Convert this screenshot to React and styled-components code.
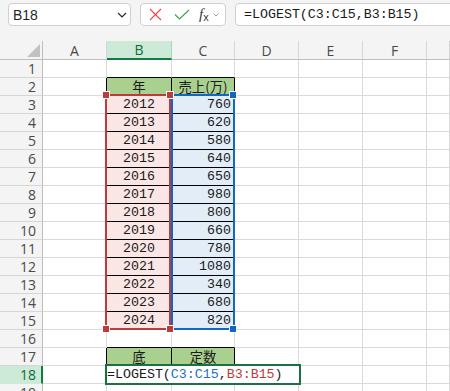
import React from "react";
import styled, { createGlobalStyle } from "styled-components";

const Global = createGlobalStyle`
  html, body { margin: 0; padding: 0; background: #ffffff; overflow: hidden; }
  body { width: 450px; height: 391px; font-family: "Liberation Sans", Arial, sans-serif; }
`;

const Page = styled.div`
  width: 450px;
  height: 391px;
  display: flex;
  flex-direction: column;
  overflow: hidden;
  background: #ffffff;
`;

const Toolbar = styled.div`
  height: 41px;
  flex: none;
  box-sizing: border-box;
  padding: 3px 0 0 8px;
  background: #f4f4f4;
  display: flex;
  align-items: flex-start;
  gap: 9px;
`;

const Box = styled.div`
  box-sizing: border-box;
  height: 23px;
  background: #ffffff;
  border: 1px solid #cfcfcf;
  border-radius: 4px;
  display: flex;
  align-items: center;
  flex: none;
  width: ${(p) => p.$w}px;
`;

const NameText = styled.span`
  font-family: "Liberation Sans", Arial, sans-serif;
  font-size: 14px;
  color: #1f1f1f;
  padding-left: 4px;
  flex: 1;
`;

const Chevron = styled.svg`
  margin-right: ${(p) => p.$mr || 0}px;
  flex: none;
`;

const IconSlot = styled.div`
  display: flex;
  align-items: center;
  justify-content: center;
  margin-left: ${(p) => p.$ml}px;
`;

const Fx = styled.span`
  font-family: "Liberation Serif", "Times New Roman", serif;
  font-style: italic;
  font-size: 15px;
  color: #3a3a3a;
  line-height: 1;
  & sub {
    font-size: 11px;
    font-style: normal;
    font-family: "Liberation Sans", Arial, sans-serif;
    vertical-align: -2px;
  }
`;

const FormulaText = styled.span`
  font-family: "Liberation Mono", "Courier New", monospace;
  font-size: 13.3px;
  color: #1a1a1a;
  padding-left: 8px;
  white-space: nowrap;
`;

const SheetWrap = styled.div`
  position: relative;
  flex: none;
`;

const Grid = styled.div`
  display: grid;
  grid-template-columns: 43px 64px 65px 63px 64px 64px 64px 1fr;
  grid-template-rows: 19px repeat(19, 18px);
`;

const Corner = styled.div`
  box-sizing: border-box;
  background: #f4f4f4;
  border-right: 1px solid #bdbdbd;
  border-bottom: 1px solid #bdbdbd;
  display: flex;
  align-items: flex-end;
  justify-content: flex-end;
  padding: 0 2px 2px 0;
`;

const ColHead = styled.div`
  box-sizing: border-box;
  background: ${(p) => (p.$sel ? "#cde9d7" : "#f4f4f4")};
  border-right: 1px solid ${(p) => (p.$sel ? "#a8d6b8" : "#d6d6d6")};
  border-bottom: ${(p) => (p.$sel ? "2px solid #107c41" : "1px solid #bdbdbd")};
  color: ${(p) => (p.$sel ? "#0e6b38" : "#4a4a4a")};
  font-family: "Open Sans", "Liberation Sans", sans-serif;
  font-size: 14px;
  display: flex;
  align-items: center;
  justify-content: center;
  line-height: 1;
  padding-top: 1px;
`;

const RowHead = styled.div`
  box-sizing: border-box;
  background: ${(p) => (p.$sel ? "#cde9d7" : "#f4f4f4")};
  border-right: ${(p) => (p.$sel ? "2px solid #107c41" : "1px solid #bdbdbd")};
  border-bottom: 1px solid ${(p) => (p.$sel ? "#cde9d7" : "#d6d6d6")};
  color: ${(p) => (p.$sel ? "#0e6b38" : "#4a4a4a")};
  font-family: "Open Sans", "Liberation Sans", sans-serif;
  font-size: 14px;
  display: flex;
  align-items: center;
  justify-content: flex-end;
  padding-right: ${(p) => (p.$sel ? 5 : 6)}px;
  line-height: 1;
`;

const Cell = styled.div`
  box-sizing: border-box;
  background: ${(p) => p.$bg || "#ffffff"};
  border-right: 1px solid ${(p) => p.$br || "#dadada"};
  border-bottom: 1px solid ${(p) => p.$bb || "#dadada"};
  font-family: "Liberation Mono", "Noto Sans CJK JP", monospace;
  font-size: 13.3px;
  color: #1a1a1a;
  display: flex;
  align-items: center;
  justify-content: ${(p) => p.$align || "center"};
  padding-right: ${(p) => (p.$align === "flex-end" ? 3 : 0)}px;
  white-space: nowrap;
  line-height: 1;
`;

const CjkText = styled.span`
  font-family: "Noto Sans CJK JP", sans-serif;
  font-size: 13.3px;
  line-height: 1;
`;

const RangeBox = styled.div`
  position: absolute;
  box-sizing: border-box;
  left: ${(p) => p.$x}px;
  top: ${(p) => p.$y}px;
  width: ${(p) => p.$w}px;
  height: ${(p) => p.$h}px;
  border: 2px solid ${(p) => p.$c};
  pointer-events: none;
`;

const Handle = styled.div`
  position: absolute;
  box-sizing: border-box;
  left: ${(p) => p.$x - 3}px;
  top: ${(p) => p.$y - 3}px;
  width: 6px;
  height: 6px;
  background: ${(p) => p.$c};
  outline: 1px solid #ffffff;
`;

const EditBox = styled.div`
  position: absolute;
  box-sizing: border-box;
  left: 105px;
  top: 323px;
  width: 196px;
  height: 21px;
  border: 2px solid #1d7044;
  background: #ffffff;
  display: flex;
  align-items: center;
  font-family: "Liberation Mono", "Courier New", monospace;
  font-size: 13.3px;
  color: #1a1a1a;
  white-space: nowrap;
`;

const Ref = styled.span`
  color: ${(p) => p.$c};
`;

const cols = ["A", "B", "C", "D", "E", "F", ""];
const years = [2012, 2013, 2014, 2015, 2016, 2017, 2018, 2019, 2020, 2021, 2022, 2023, 2024];
const sales = [760, 620, 580, 640, 650, 980, 800, 660, 780, 1080, 340, 680, 820];

const inTable = (r, c) =>
  (c === 1 || c === 2) && ((r >= 2 && r <= 15) || r === 17);

function cellInfo(r, c) {
  if (r === 2 && c === 1) return { text: <CjkText>年</CjkText>, bg: "#a9d08e" };
  if (r === 2 && c === 2) return { text: <CjkText>売上(万)</CjkText>, bg: "#a9d08e" };
  if (r === 17 && c === 1) return { text: <CjkText>底</CjkText>, bg: "#a9d08e" };
  if (r === 17 && c === 2) return { text: <CjkText>定数</CjkText>, bg: "#a9d08e" };
  if (r >= 3 && r <= 15 && c === 1) return { text: years[r - 3], bg: "#fbe6e6" };
  if (r >= 3 && r <= 15 && c === 2)
    return { text: sales[r - 3], bg: "#e3edf8", align: "flex-end" };
  return {};
}

export default function App() {
  const rows = Array.from({ length: 19 }, (_, i) => i + 1);
  return (
    <Page>
      <Global />
      <Toolbar>
        <Box $w={123}>
          <NameText>B18</NameText>
          <Chevron $mr={3} width="10" height="6" viewBox="0 0 10 6">
            <path d="M1 1 L5 5 L9 1" fill="none" stroke="#2b2b2b" strokeWidth="1.2" />
          </Chevron>
        </Box>
        <Box $w={86}>
          <IconSlot $ml={8}>
            <svg width="13" height="13" viewBox="0 0 13 13">
              <path d="M1 1 L12 12 M12 1 L1 12" stroke="#e5484d" strokeWidth="1.1" fill="none" />
            </svg>
          </IconSlot>
          <IconSlot $ml={12}>
            <svg width="16" height="11" viewBox="0 0 16 11">
              <path d="M1 5.5 L5.5 10 L15 1" stroke="#36a852" strokeWidth="1.2" fill="none" />
            </svg>
          </IconSlot>
          <IconSlot $ml={9}>
            <Fx>
              f<sub>x</sub>
            </Fx>
          </IconSlot>
          <IconSlot $ml={4}>
            <svg width="6" height="4" viewBox="0 0 6 4">
              <path d="M0.5 0.5 L3 3 L5.5 0.5" stroke="#9a9a9a" strokeWidth="1" fill="none" />
            </svg>
          </IconSlot>
        </Box>
        <Box $w={240}>
          <FormulaText>=LOGEST(C3:C15,B3:B15)</FormulaText>
        </Box>
      </Toolbar>
      <SheetWrap>
        <Grid>
          <Corner>
            <svg width="13" height="13" viewBox="0 0 13 13">
              <path d="M13 0 L13 13 L0 13 Z" fill="#c2c2c2" />
            </svg>
          </Corner>
          {cols.map((c, i) => (
            <ColHead key={i} $sel={c === "B"}>
              {c}
            </ColHead>
          ))}
          {rows.map((r) => (
            <React.Fragment key={r}>
              <RowHead $sel={r === 18}>{r}</RowHead>
              {cols.map((_, ci) => {
                const info = cellInfo(r, ci);
                const br =
                  inTable(r, ci) || inTable(r, ci + 1) ? "#000000" : undefined;
                const bb =
                  inTable(r, ci) || inTable(r + 1, ci) ? "#000000" : undefined;
                return (
                  <Cell key={ci} $bg={info.bg} $br={br} $bb={bb} $align={info.align}>
                    {info.text}
                  </Cell>
                );
              })}
            </React.Fragment>
          ))}
        </Grid>
        <RangeBox $x={105} $y={53} $w={66} $h={236} $c="#c0393b" />
        <RangeBox $x={171} $y={53} $w={64} $h={236} $c="#1068c4" />
        <Handle $x={106} $y={54} $c="#c0393b" />
        <Handle $x={170} $y={54} $c="#c0393b" />
        <Handle $x={106} $y={288} $c="#c0393b" />
        <Handle $x={170} $y={288} $c="#c0393b" />
        <Handle $x={233} $y={54} $c="#1068c4" />
        <Handle $x={233} $y={288} $c="#1068c4" />
        <EditBox>
          =LOGEST(<Ref $c="#1f6fc5">C3:C15</Ref>,<Ref $c="#c0393b">B3:B15</Ref>)
        </EditBox>
      </SheetWrap>
    </Page>
  );
}
